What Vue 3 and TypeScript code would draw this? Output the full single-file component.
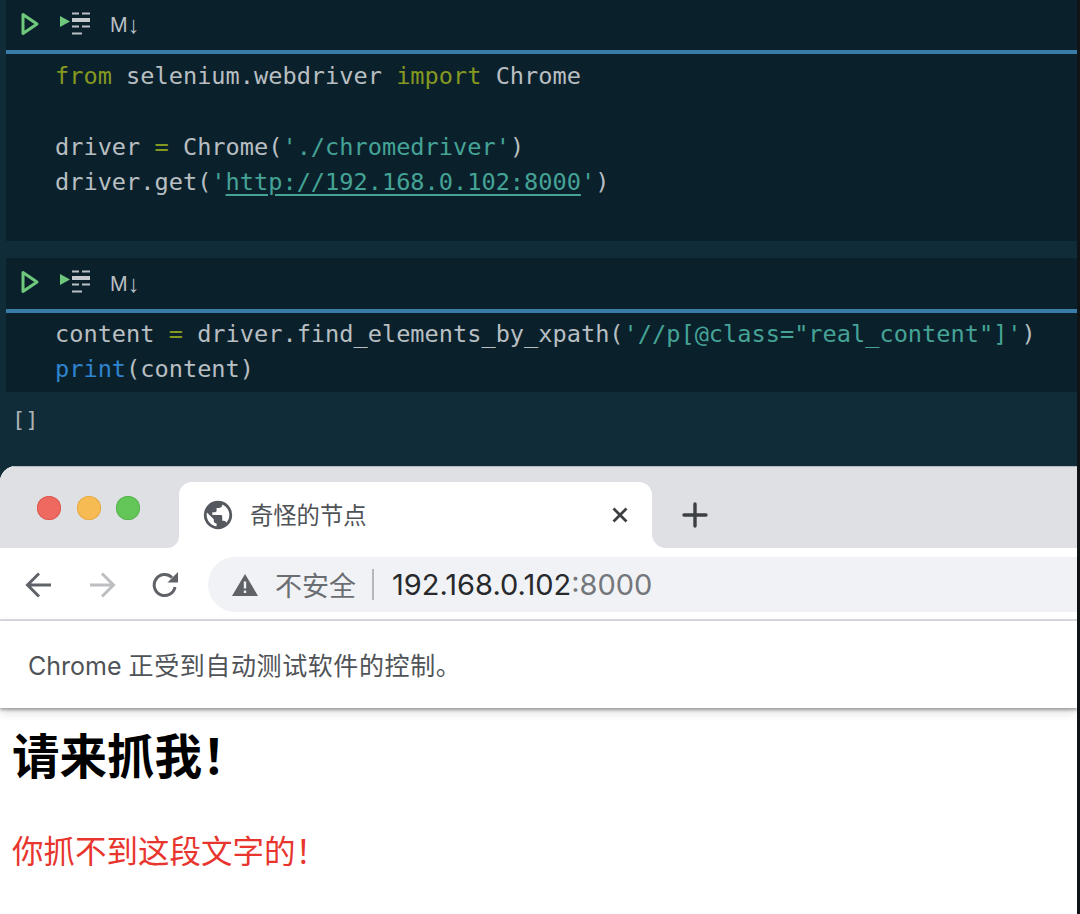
<script setup lang="ts">
const green = '#6fc97d'
</script>

<template>
  <div class="root">
    <section class="cell first">
      <div class="cell-bar">
        <svg class="bar-svg" width="90" height="30" viewBox="0 0 90 30" aria-hidden="true">
          <path d="M3 3.5 L17 13 L3 22.5 Z" fill="none" :stroke="green" stroke-width="3" stroke-linejoin="round" />
          <path d="M40 5 L50 10.5 L40 16 Z" :fill="green" />
          <path d="M52 2.5H59M62 2.5H70M52 15.5H59M62 15.5H70M52 22.5H62" stroke="#b9bfc2" stroke-width="2" fill="none" />
          <path d="M52 9H70" stroke="#c5cacc" stroke-width="4" />
        </svg>
        <span class="md">M<span class="md-arrow">↓</span></span>
      </div>
      <div class="rule"></div>
      <pre class="code"><span class="kw">from</span> selenium.webdriver <span class="kw">import</span> Chrome

driver <span class="kw">=</span> Chrome(<span class="str">'./chromedriver'</span>)
driver.get(<span class="str">'<span class="link">http://192.168.0.102:8000</span>'</span>)</pre>
    </section>

    <section class="cell second">
      <div class="cell-bar">
        <svg class="bar-svg" width="90" height="30" viewBox="0 0 90 30" aria-hidden="true">
          <path d="M3 3.5 L17 13 L3 22.5 Z" fill="none" :stroke="green" stroke-width="3" stroke-linejoin="round" />
          <path d="M40 5 L50 10.5 L40 16 Z" :fill="green" />
          <path d="M52 2.5H59M62 2.5H70M52 15.5H59M62 15.5H70M52 22.5H62" stroke="#b9bfc2" stroke-width="2" fill="none" />
          <path d="M52 9H70" stroke="#c5cacc" stroke-width="4" />
        </svg>
        <span class="md">M<span class="md-arrow">↓</span></span>
      </div>
      <div class="rule"></div>
      <pre class="code">content <span class="kw">=</span> driver.find_elements_by_xpath(<span class="str">'//p[@class="real_content"]'</span>)
<span class="fn">print</span>(content)</pre>
    </section>

    <div class="output">[]</div>

    <div class="browser">
      <div class="tabstrip">
        <div class="strip-left">
          <span class="light red"></span>
          <span class="light yellow"></span>
          <span class="light lime"></span>
        </div>
        <div class="tab-slot">
          <div class="tab">
            <svg class="globe" width="34" height="34" viewBox="0 0 24 24" aria-hidden="true">
              <path fill="#55595f" d="M12 2a10 10 0 1 0 0 20 10 10 0 0 0 0-20zM4 12c0-.6.1-1.200.2-1.800L9 15v1c0 1.100.9 2 2 2v2c-3.900-.5-7-3.900-7-8zm13.900 5.400c-.3-.8-1-1.400-1.900-1.400h-1v-3c0-.6-.4-1-1-1H8v-2h2c.6 0 1-.4 1-1V7h2c1.100 0 2-.9 2-2v-.4c2.900 1.200 5 4.100 5 7.400 0 2.100-.8 4-2.100 5.400z" />
            </svg>
            <span class="tab-title">奇怪的节点</span>
            <svg class="close" width="18" height="18" viewBox="0 0 18 18" aria-hidden="true">
              <path d="M2.500 2.500L15.500 15.500M15.500 2.500L2.500 15.500" stroke="#3c4043" stroke-width="2.800" />
            </svg>
          </div>
        </div>
        <div class="strip-right">
          <svg width="26" height="26" viewBox="0 0 26 26" aria-hidden="true">
            <path d="M13 2V24M2 13H24" stroke="#3c4043" stroke-width="3.400" stroke-linecap="round" />
          </svg>
        </div>
      </div>

      <div class="toolbar">
        <div class="nav">
          <svg width="28" height="28" viewBox="0 0 28 28" aria-hidden="true">
            <path d="M26 14H3M14 2.500L2.500 14L14 25.500" fill="none" stroke="#5f6368" stroke-width="3" />
          </svg>
          <svg width="28" height="28" viewBox="0 0 28 28" aria-hidden="true">
            <path d="M2 14H25M14 2.500L25.500 14L14 25.500" fill="none" stroke="#bcbec1" stroke-width="3" />
          </svg>
          <svg width="28" height="28" viewBox="0 0 28 28" aria-hidden="true">
            <path d="M24 16a10.500 10.500 0 1 1-3-9.500" fill="none" stroke="#5f6368" stroke-width="3" />
            <path d="M27 1V11.500H16.500Z" fill="#5f6368" />
          </svg>
        </div>
        <div class="omnibox">
          <svg width="26" height="22" viewBox="0 0 26 22" aria-hidden="true">
            <path fill-rule="evenodd" fill="#5f6368" d="M13 0L26 22H0ZM11.800 7.500V14.500H14.200V7.500ZM11.800 16.500V19H14.200V16.500Z" />
          </svg>
          <span class="insecure">不安全</span>
          <span class="divider"></span>
          <span class="url">192.168.0.102<span class="port">:8000</span></span>
        </div>
      </div>

      <div class="infobar"><span>Chrome <span class="notice">正受到自动测试软件的控制。</span></span></div>

      <div class="page">
        <h1 class="heading">请来抓我！</h1>
        <p class="red-text">你抓不到这段文字的！</p>
      </div>
    </div>
  </div>
</template>

<style scoped>
.root {
  width: 1077px;
  height: 914px;
  border-right: 3px solid #111416;
  background: #102c38;
  overflow: hidden;
  display: flex;
  flex-direction: column;
}
.cell {
  margin-left: 6px;
  background: #0a212c;
  flex: none;
}
.first {
  height: 241px;
}
.second {
  height: 134px;
  margin-top: 17px;
}
.cell-bar {
  display: flex;
  align-items: center;
  height: 50px;
  padding-left: 14px;
  color: #b9bfc2;
}
.second .cell-bar {
  height: 51px;
}
.bar-svg {
  flex: none;
  margin-top: 1px;
}
.md {
  margin-left: 0;
  font: 19.500px/24px "Inter", "Liberation Sans", sans-serif;
  display: flex;
  align-items: center;
}
.md-arrow {
  font: 24px/24px "Liberation Sans", sans-serif;
}
.rule {
  height: 4px;
  background: #3a7ca8;
}
.code {
  margin: 0;
  padding: 4px 0 0 49px;
  font: 23.62px/35.4px "DejaVu Sans Mono", monospace;
  color: #b8bec1;
}
.first .code {
  padding-top: 5px;
}
.kw {
  color: #85981f;
}
.str {
  color: #45a396;
}
.link {
  text-decoration: underline;
  text-underline-offset: 4px;
  text-decoration-thickness: 2px;
}
.fn {
  color: #2f84cf;
}
.output {
  flex: none;
  height: 74px;
  padding: 14px 0 0 12px;
  box-sizing: border-box;
  font: 22px/28px "DejaVu Sans Mono", monospace;
  color: #aab2b5;
}
.browser {
  flex: 1;
  min-height: 0;
  background: #fff;
  border-radius: 16px 0 0 0;
  overflow: hidden;
  font-family: "Inter", "Noto Sans CJK SC", sans-serif;
}
.tabstrip {
  display: flex;
  height: 82px;
  background: #fff;
  border-top: 1px solid #b6babd;
  box-sizing: border-box;
}
.strip-left {
  width: 179px;
  flex: none;
  display: flex;
  align-items: flex-start;
  gap: 15.500px;
  padding: 29px 0 0 37px;
  box-sizing: border-box;
  background: #dfe0e4;
  border-bottom-right-radius: 12px;
}
.light {
  width: 24px;
  height: 24px;
  border-radius: 50%;
  flex: none;
}
.red {
  background: #ee6a60;
  box-shadow: inset 0 0 0 1px #dc5b52;
}
.yellow {
  background: #f6bb52;
  box-shadow: inset 0 0 0 1px #e5ab48;
}
.lime {
  background: #64c658;
  box-shadow: inset 0 0 0 1px #58b44d;
}
.tab-slot {
  width: 473px;
  flex: none;
  background: #dfe0e4;
  padding-top: 15px;
  box-sizing: border-box;
}
.tab {
  height: 66px;
  background: #fff;
  border-radius: 13px 13px 0 0;
  display: flex;
  align-items: center;
  padding: 0 23px 0 22px;
  box-sizing: border-box;
}
.globe {
  flex: none;
}
.tab-title {
  margin-left: 15px;
  font-size: 23.300px;
  color: #4f5256;
  flex: 1;
  position: relative;
  top: -1px;
}
.close {
  flex: none;
}
.strip-right {
  flex: 1;
  background: #dfe0e4;
  border-bottom-left-radius: 14px;
  display: flex;
  align-items: flex-start;
  padding: 35px 0 0 30px;
}
.toolbar {
  height: 73px;
  display: flex;
  align-items: center;
  border-bottom: 2px solid #dcdde2;
  box-sizing: border-box;
  padding-top: 2px;
}
.nav {
  width: 208px;
  flex: none;
  display: flex;
  gap: 35px;
  padding-left: 25px;
  box-sizing: border-box;
}
.omnibox {
  flex: 1;
  height: 55px;
  background: #f1f2f5;
  border-radius: 28px 0 0 28px;
  display: flex;
  align-items: center;
  padding-left: 24px;
}
.insecure {
  margin-left: 17px;
  font-size: 27px;
  color: #6a6d71;
}
.divider {
  width: 2px;
  height: 31px;
  margin: 0 18px 0 16px;
  background: #b5b7ba;
}
.url {
  font-size: 29px;
  color: #27292c;
}
.port {
  color: #74777b;
}
.infobar {
  height: 87px;
  display: flex;
  align-items: center;
  padding: 0 0 2px 28px;
  box-sizing: border-box;
  font-size: 25px;
  color: #4f5357;
  position: relative;
  box-shadow: 0 2px 3px rgba(0, 0, 0, 0.32), 0 4px 10px rgba(0, 0, 0, 0.14);
}
.notice {
  letter-spacing: 0.6px;
}
.page {
  padding: 12px 0 0 12px;
  font-family: "Noto Sans CJK SC", sans-serif;
}
.heading {
  margin: 0;
  font-size: 47.500px;
  line-height: 68px;
  font-weight: 700;
  color: #000;
}
.red-text {
  margin: 38px 0 0;
  font-size: 31.500px;
  line-height: 46px;
  color: #e8352d;
}
</style>

<style>
body {
  background: #102c38;
}
</style>
